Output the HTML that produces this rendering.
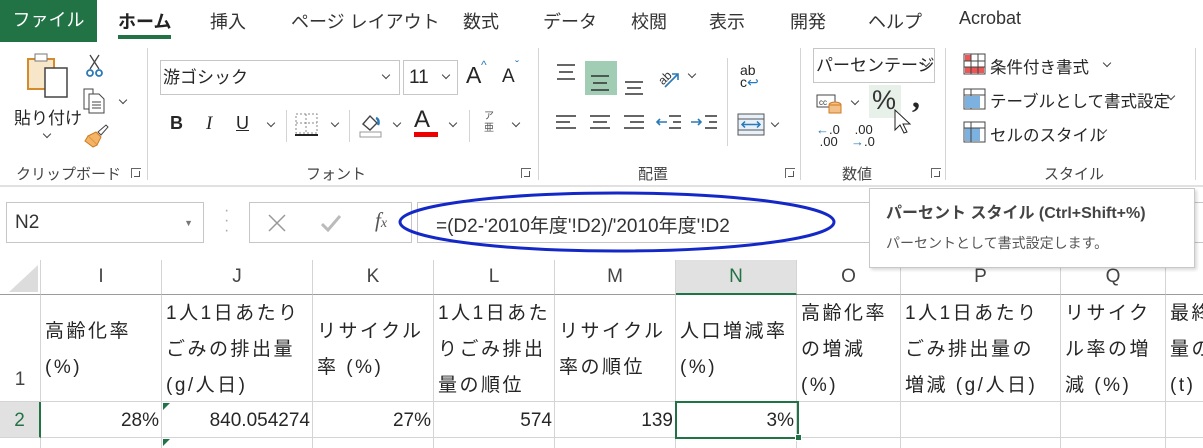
<!DOCTYPE html>
<html><head><meta charset="utf-8"><style>
*{margin:0;padding:0;box-sizing:border-box}
body{width:1203px;height:445px;overflow:hidden;background:#fff;font-family:"Liberation Sans","Noto Sans CJK JP",sans-serif;color:#262626;position:relative}
.a{position:absolute;white-space:nowrap}
.tab{position:absolute;top:8px;font-size:18px;color:#333}
.sm{font-size:16px;color:#262626}
.lbl{position:absolute;top:163px;font-size:15px;color:#444}
.vsep{position:absolute;top:48px;width:1px;height:132px;background:#d4d4d4}
.ssep{position:absolute;top:110px;width:1px;height:32px;background:#d4d4d4}
.cv{position:absolute;width:6px;height:6px;border-right:1.5px solid #444;border-bottom:1.5px solid #444;transform:rotate(45deg);z-index:5}
.dl{position:absolute;top:168px;width:10px;height:10px;border-left:1px solid #666;border-top:1px solid #666}
.dl:after{content:"";position:absolute;left:2px;top:2px;width:5px;height:5px;border-right:1.5px solid #555;border-bottom:1.5px solid #555}
.ch{position:absolute;top:260px;height:35px;border-right:1px solid #d4d4d4;border-bottom:1px solid #9b9b9b;background:#fff;text-align:center;font-size:19px;line-height:34px;color:#444}
.c1{position:absolute;top:295px;height:107px;border-right:1px solid #d4d4d4;border-bottom:1px solid #d4d4d4;font-size:19px;line-height:36px;padding:1px 4px 0;letter-spacing:2.5px;white-space:nowrap;overflow:hidden}
.c2{position:absolute;top:402px;height:36px;border-right:1px solid #d4d4d4;border-bottom:1px solid #d4d4d4;font-size:19px;line-height:38px;text-align:right;padding-right:2px}
.c3{position:absolute;top:438px;height:10px;border-right:1px solid #d4d4d4}
</style></head><body>
<!-- tab bar -->
<div class="a" style="left:0;top:0;width:97px;height:42px;background:#217346;color:#fff;font-size:18px;line-height:40px;text-align:center">ファイル</div>
<div class="tab" style="left:118px;font-weight:bold;color:#222">ホーム</div>
<div class="a" style="left:118px;top:35px;width:53px;height:4px;background:#217346"></div>
<div class="tab" style="left:210px">挿入</div>
<div class="tab" style="left:291px">ページ レイアウト</div>
<div class="tab" style="left:463px">数式</div>
<div class="tab" style="left:543px">データ</div>
<div class="tab" style="left:631px">校閲</div>
<div class="tab" style="left:709px">表示</div>
<div class="tab" style="left:790px">開発</div>
<div class="tab" style="left:868px">ヘルプ</div>
<div class="tab" style="left:959px">Acrobat</div>
<!-- ribbon -->
<div class="a" style="left:0;top:185px;width:1203px;height:2px;background:#e1e1e1"></div>
<div class="vsep" style="left:147px"></div><div class="vsep" style="left:538px"></div><div class="vsep" style="left:800px"></div><div class="vsep" style="left:945px"></div><div class="vsep" style="left:1195px"></div>
<div class="ssep" style="left:286px"></div><div class="ssep" style="left:349px"></div><div class="ssep" style="left:469px"></div>
<div class="a" style="left:727px;top:58px;width:1px;height:88px;background:#d4d4d4"></div>
<!-- clipboard -->
<svg class="a" style="left:26px;top:52px" width="46" height="46"><rect x="2" y="7" width="26" height="30" fill="#f7e7c8" stroke="#d58a2b" stroke-width="2"/><rect x="9" y="2" width="12" height="7" fill="#fff" stroke="#777"/><rect x="19" y="16" width="22" height="29" fill="#fff" stroke="#444" stroke-width="1.5"/></svg>
<div class="a sm" style="left:14px;top:104px;font-size:17px">貼り付け</div>
<div class="cv" style="left:44px;top:131px"></div>
<svg class="a" style="left:86px;top:54px" width="18" height="24"><path d="M4 1l9 14M13 1L4 15" stroke="#444" stroke-width="1.3"/><circle cx="4" cy="19" r="3" fill="none" stroke="#2a7ab8" stroke-width="1.8"/><circle cx="13" cy="19" r="3" fill="none" stroke="#2a7ab8" stroke-width="1.8"/></svg>
<svg class="a" style="left:83px;top:88px" width="24" height="26"><path d="M1 1h9v20H1z" fill="#fff" stroke="#444"/><path d="M6 6h10l5 5v14H6z" fill="#fff" stroke="#444"/><path d="M9 14h9M9 17h9M9 20h9" stroke="#444"/></svg>
<div class="cv" style="left:120px;top:97px"></div>
<svg class="a" style="left:84px;top:124px" width="26" height="24"><path d="M14 8l8-7 2 2-7 8z" fill="#fff" stroke="#444"/><path d="M4 12l8-4 5 5-4 8z" fill="#f4b465" stroke="#d07a20"/><path d="M4 12l-3 5 8 6 4-2" fill="#f4b465" stroke="#d07a20"/></svg>
<div class="lbl" style="left:16px">クリップボード</div>
<div class="dl" style="left:131px"></div>
<!-- font -->
<div class="a" style="left:160px;top:60px;width:240px;height:35px;border:1px solid #c6c6c6;font-size:17px;line-height:33px;padding-left:2px">游ゴシック<span class="cv" style="right:10px;top:11px"></span></div>
<div class="a" style="left:403px;top:60px;width:55px;height:35px;border:1px solid #c6c6c6;font-size:19px;line-height:33px;padding-left:5px">11<span class="cv" style="right:8px;top:11px"></span></div>
<div class="a" style="left:466px;top:62px;font-size:23px">A</div><div class="a" style="left:481px;top:58px;font-size:12px;color:#2a7ab8">^</div>
<div class="a" style="left:502px;top:66px;font-size:19px">A</div><div class="a" style="left:515px;top:58px;font-size:12px;color:#2a7ab8">ˇ</div>
<div class="a" style="left:170px;top:113px;font-size:18px;font-weight:bold">B</div>
<div class="a" style="left:206px;top:113px;font-size:19px;font-style:italic;font-family:'Liberation Serif',serif">I</div>
<div class="a" style="left:236px;top:113px;font-size:18px;text-decoration:underline">U</div>
<div class="cv" style="left:268px;top:120px"></div>
<svg class="a" style="left:295px;top:113px" width="24" height="24"><rect x="1" y="1" width="21" height="19" fill="none" stroke="#888" stroke-dasharray="2 2"/><path d="M11 1v19M1 10h21" stroke="#888" stroke-dasharray="2 2"/><path d="M0 22h23" stroke="#222" stroke-width="2"/></svg>
<div class="cv" style="left:332px;top:120px"></div>
<svg class="a" style="left:359px;top:112px" width="24" height="26"><path d="M4 12l7-8 7 7-7 7z" fill="#fff" stroke="#444" stroke-width="1.4"/><path d="M17 6c3 1 3 5 2 7" stroke="#2a7ab8" stroke-width="2.5" fill="none"/><rect x="1" y="20" width="21" height="5" fill="#fff" stroke="#999"/></svg>
<div class="cv" style="left:394px;top:120px"></div>
<div class="a" style="left:414px;top:106px;font-size:24px">A</div>
<div class="a" style="left:414px;top:132px;width:24px;height:5px;background:#e00"></div>
<div class="cv" style="left:450px;top:120px"></div>
<div class="a" style="left:484px;top:111px;font-size:10px;line-height:12px;color:#555">ア<br>亜</div>
<div class="cv" style="left:513px;top:120px"></div>
<div class="lbl" style="left:306px">フォント</div>
<div class="dl" style="left:521px"></div>
<!-- align -->
<div class="a" style="left:585px;top:61px;width:32px;height:34px;background:#a0cdb4"></div>
<svg class="a" style="left:550px;top:55px" width="180" height="90">
<g stroke="#333" stroke-width="1.6" fill="none">
<path d="M7 10h18M9 17h14M7 24h18"/>
<path d="M41 21h18M43 28h14M41 35h18"/>
<path d="M75 27h18M77 33h14M75 39h18"/>
<path d="M6 61h20M6 67h14M6 73h20M40 61h20M43 67h14M40 73h20M74 61h20M80 67h14M74 73h20"/>
<path d="M119 61h12M123 67h8M119 73h12M155 61h12M159 67h8M155 73h12"/>
</g>
<path d="M107 67h10M110 64l-3 3 3 3" stroke="#2a7ab8" stroke-width="1.6" fill="none"/>
<path d="M141 67h10M148 64l3 3-3 3" stroke="#2a7ab8" stroke-width="1.6" fill="none"/>
<path d="M115 32l13-13M122 19h6v6" stroke="#2a7ab8" stroke-width="1.6" fill="none"/>
<text x="107" y="28" font-size="12" fill="#333" transform="rotate(-45 113 22)">ab</text>
</svg>
<div class="cv" style="left:689px;top:71px"></div>
<div class="a" style="left:740px;top:64px;font-size:14px;line-height:12px">ab<br>c<span style="color:#2a7ab8">↩</span></div>
<svg class="a" style="left:737px;top:113px" width="28" height="23"><rect x="1" y="1" width="26" height="21" fill="#e8f1f9" stroke="#555"/><path d="M1 6h26M1 17h26" stroke="#555"/><path d="M5 11.5h18M8 8.5l-3 3 3 3M20 8.5l3 3-3 3" stroke="#2a7ab8" stroke-width="1.5" fill="none"/></svg>
<div class="cv" style="left:772px;top:120px"></div>
<div class="lbl" style="left:638px">配置</div>
<div class="dl" style="left:785px"></div>
<!-- number -->
<div class="a" style="left:813px;top:48px;width:122px;height:35px;border:1px solid #c6c6c6;font-size:17px;line-height:33px;padding-left:2px">パーセンテージ</div>
<div class="cv" style="left:923px;top:60px"></div>
<svg class="a" style="left:816px;top:93px" width="26" height="22"><rect x="1" y="2" width="18" height="12" fill="#fff" stroke="#444"/><text x="3" y="12" font-size="8" fill="#333">cc</text><ellipse cx="19" cy="12" rx="6" ry="3" fill="#f3c08a" stroke="#d07a20"/><rect x="13" y="12" width="12" height="8" fill="#f3c08a" stroke="#d07a20"/></svg>
<div class="cv" style="left:852px;top:98px"></div>
<div class="a" style="left:869px;top:85px;width:32px;height:33px;background:#e7f1ea"></div>
<div class="a" style="left:872px;top:85px;font-size:27px;color:#333">%</div>
<div class="a" style="left:912px;top:78px;font-size:32px;font-weight:bold;font-family:'Liberation Serif',serif">,</div>
<svg class="a" style="left:893px;top:108px" width="20" height="28"><path d="M2 2v20l5-5 4 8 3-1-4-8h7z" fill="#fff" stroke="#222"/></svg>
<div class="a" style="left:816px;top:124px;font-size:13px;line-height:12px"><span style="color:#2a7ab8">←</span>.0<br>&nbsp;.00</div>
<div class="a" style="left:851px;top:124px;font-size:13px;line-height:12px">&nbsp;.00<br><span style="color:#2a7ab8">→</span>.0</div>
<div class="lbl" style="left:842px">数値</div>
<div class="dl" style="left:931px"></div>
<!-- style -->
<svg class="a" style="left:963px;top:53px" width="24" height="92"><g fill="#fff" stroke="#444"><rect x="1" y="1" width="21" height="20"/><rect x="1" y="36" width="21" height="20"/><rect x="1" y="69" width="21" height="20"/></g><rect x="2" y="2" width="6" height="6" fill="#e55"/><rect x="2" y="14" width="19" height="6" fill="#e55"/><path d="M1 8h21M1 14h21M8 1v20M15 1v20M1 42h21M8 36v20" stroke="#444" fill="none"/><rect x="2" y="43" width="15" height="12" fill="#7db2e0"/><rect x="2" y="75" width="15" height="13" fill="#7db2e0"/><path d="M1 75h21M8 69v20" stroke="#444"/></svg>
<div class="a" style="left:990px;top:54px;font-size:16.5px">条件付き書式</div><div class="cv" style="left:1104px;top:60px"></div>
<div class="a" style="left:990px;top:88px;font-size:16.5px">テーブルとして書式設定</div><div class="cv" style="left:1168px;top:93px"></div>
<div class="a" style="left:990px;top:122px;font-size:16.5px">セルのスタイル</div><div class="cv" style="left:1100px;top:127px"></div>
<div class="lbl" style="left:1044px">スタイル</div>
<!-- formula bar -->
<div class="a" style="left:6px;top:202px;width:198px;height:41px;border:1px solid #c6c6c6;font-size:19px;line-height:40px;padding-left:8px;color:#333">N2<span style="position:absolute;right:10px;font-size:9px;color:#777">▼</span></div>
<div class="a" style="left:224px;top:206px;font-size:16px;color:#aaa;line-height:10px">·<br>·<br>·</div>
<div class="a" style="left:249px;top:202px;width:163px;height:41px;border:1px solid #c6c6c6"></div>
<svg class="a" style="left:268px;top:214px" width="18" height="18"><path d="M1 1l16 16M17 1L1 17" stroke="#999" stroke-width="1.5"/></svg>
<svg class="a" style="left:321px;top:214px" width="20" height="18"><path d="M1 10l6 6L19 2" stroke="#bbb" stroke-width="3" fill="none"/></svg>
<div class="a" style="left:375px;top:208px;font-size:21px;font-style:italic;font-family:'Liberation Serif',serif;color:#555">f<span style="font-size:14px">x</span></div>
<div class="a" style="left:417px;top:202px;width:790px;height:41px;border:1px solid #c6c6c6"></div>
<div class="a" style="left:436px;top:211px;font-size:19px;color:#333">=(D2-'2010年度'!D2)/'2010年度'!D2</div>
<svg class="a" style="left:397px;top:190px" width="442" height="66"><ellipse cx="220" cy="32" rx="217" ry="29" fill="none" stroke="#1428c8" stroke-width="3"/></svg>
<!-- column headers -->
<div class="a" style="left:0;top:260px;width:41px;height:35px;border-right:1px solid #d4d4d4;border-bottom:1px solid #9b9b9b"></div>
<svg class="a" style="left:9px;top:265px" width="30" height="28"><path d="M29 0v27H0z" fill="#dcdcdc"/></svg>
<div class="ch" style="left:41px;width:121px">I</div>
<div class="ch" style="left:162px;width:151px">J</div>
<div class="ch" style="left:313px;width:121px">K</div>
<div class="ch" style="left:434px;width:121px">L</div>
<div class="ch" style="left:555px;width:121px">M</div>
<div class="ch" style="left:676px;width:121px;background:#e1e1e1;color:#217346;border-bottom:2px solid #217346">N</div>
<div class="ch" style="left:797px;width:104px">O</div>
<div class="ch" style="left:901px;width:160px">P</div>
<div class="ch" style="left:1061px;width:105px">Q</div>
<div class="ch" style="left:1166px;width:60px"></div>
<!-- rows -->
<div class="a" style="left:0;top:295px;width:41px;height:107px;border-right:1px solid #d4d4d4;border-bottom:1px solid #d4d4d4;font-size:19px;text-align:center;padding-top:74px;color:#444">1</div>
<div class="a" style="left:0;top:402px;width:41px;height:36px;background:#e1e1e1;border-right:2px solid #217346;border-bottom:1px solid #d4d4d4;font-size:19px;text-align:center;line-height:38px;color:#217346">2</div>
<div class="a" style="left:0;top:438px;width:41px;height:10px;border-right:1px solid #d4d4d4"></div>
<div class="c1" style="left:41px;width:121px;padding-top:19px">高齢化率<br>(%)</div>
<div class="c1" style="left:162px;width:151px">1人1日あたり<br>ごみの排出量<br>(g/人日)</div>
<div class="c1" style="left:313px;width:121px;padding-top:19px">リサイクル<br>率 (%)</div>
<div class="c1" style="left:434px;width:121px">1人1日あた<br>りごみ排出<br>量の順位</div>
<div class="c1" style="left:555px;width:121px;padding-top:19px">リサイクル<br>率の順位</div>
<div class="c1" style="left:676px;width:121px;padding-top:19px">人口増減率<br>(%)</div>
<div class="c1" style="left:797px;width:104px">高齢化率<br>の増減<br>(%)</div>
<div class="c1" style="left:901px;width:160px">1人1日あたり<br>ごみ排出量の<br>増減 (g/人日)</div>
<div class="c1" style="left:1061px;width:105px">リサイク<br>ル率の増<br>減 (%)</div>
<div class="c1" style="left:1166px;width:60px;border-right:none">最終<br>量の<br>(t)</div>
<div class="c2" style="left:41px;width:121px">28%</div>
<div class="c2" style="left:162px;width:151px">840.054274</div>
<div class="a" style="left:163px;top:403px;width:0;height:0;border-top:7px solid #217346;border-right:7px solid transparent"></div>
<div class="a" style="left:163px;top:439px;width:0;height:0;border-top:7px solid #217346;border-right:7px solid transparent"></div>
<div class="c2" style="left:313px;width:121px">27%</div>
<div class="c2" style="left:434px;width:121px">574</div>
<div class="c2" style="left:555px;width:121px">139</div>
<div class="c2" style="left:676px;width:121px">3%</div>
<div class="c2" style="left:797px;width:104px"></div>
<div class="c2" style="left:901px;width:160px"></div>
<div class="c2" style="left:1061px;width:105px"></div>
<div class="c2" style="left:1166px;width:60px;border-right:none"></div>
<div class="c3" style="left:41px;width:121px"></div><div class="c3" style="left:162px;width:151px"></div><div class="c3" style="left:313px;width:121px"></div><div class="c3" style="left:434px;width:121px"></div><div class="c3" style="left:555px;width:121px"></div><div class="c3" style="left:676px;width:121px"></div><div class="c3" style="left:797px;width:104px"></div><div class="c3" style="left:901px;width:160px"></div><div class="c3" style="left:1061px;width:105px"></div>
<div class="a" style="left:675px;top:401px;width:124px;height:38px;border:2px solid #217346"></div>
<div class="a" style="left:795px;top:434px;width:7px;height:7px;background:#217346;border:1px solid #fff"></div>
<!-- tooltip -->
<div class="a" style="left:869px;top:188px;width:326px;height:80px;background:#fff;border:1px solid #c8c8c8;box-shadow:2px 2px 3px rgba(0,0,0,.15)"></div>
<div class="a" style="left:886px;top:199px;font-size:16px;font-weight:bold;color:#444">パーセント スタイル (Ctrl+Shift+%)</div>
<div class="a" style="left:886px;top:233px;font-size:14px;color:#555">パーセントとして書式設定します。</div>
</body></html>
